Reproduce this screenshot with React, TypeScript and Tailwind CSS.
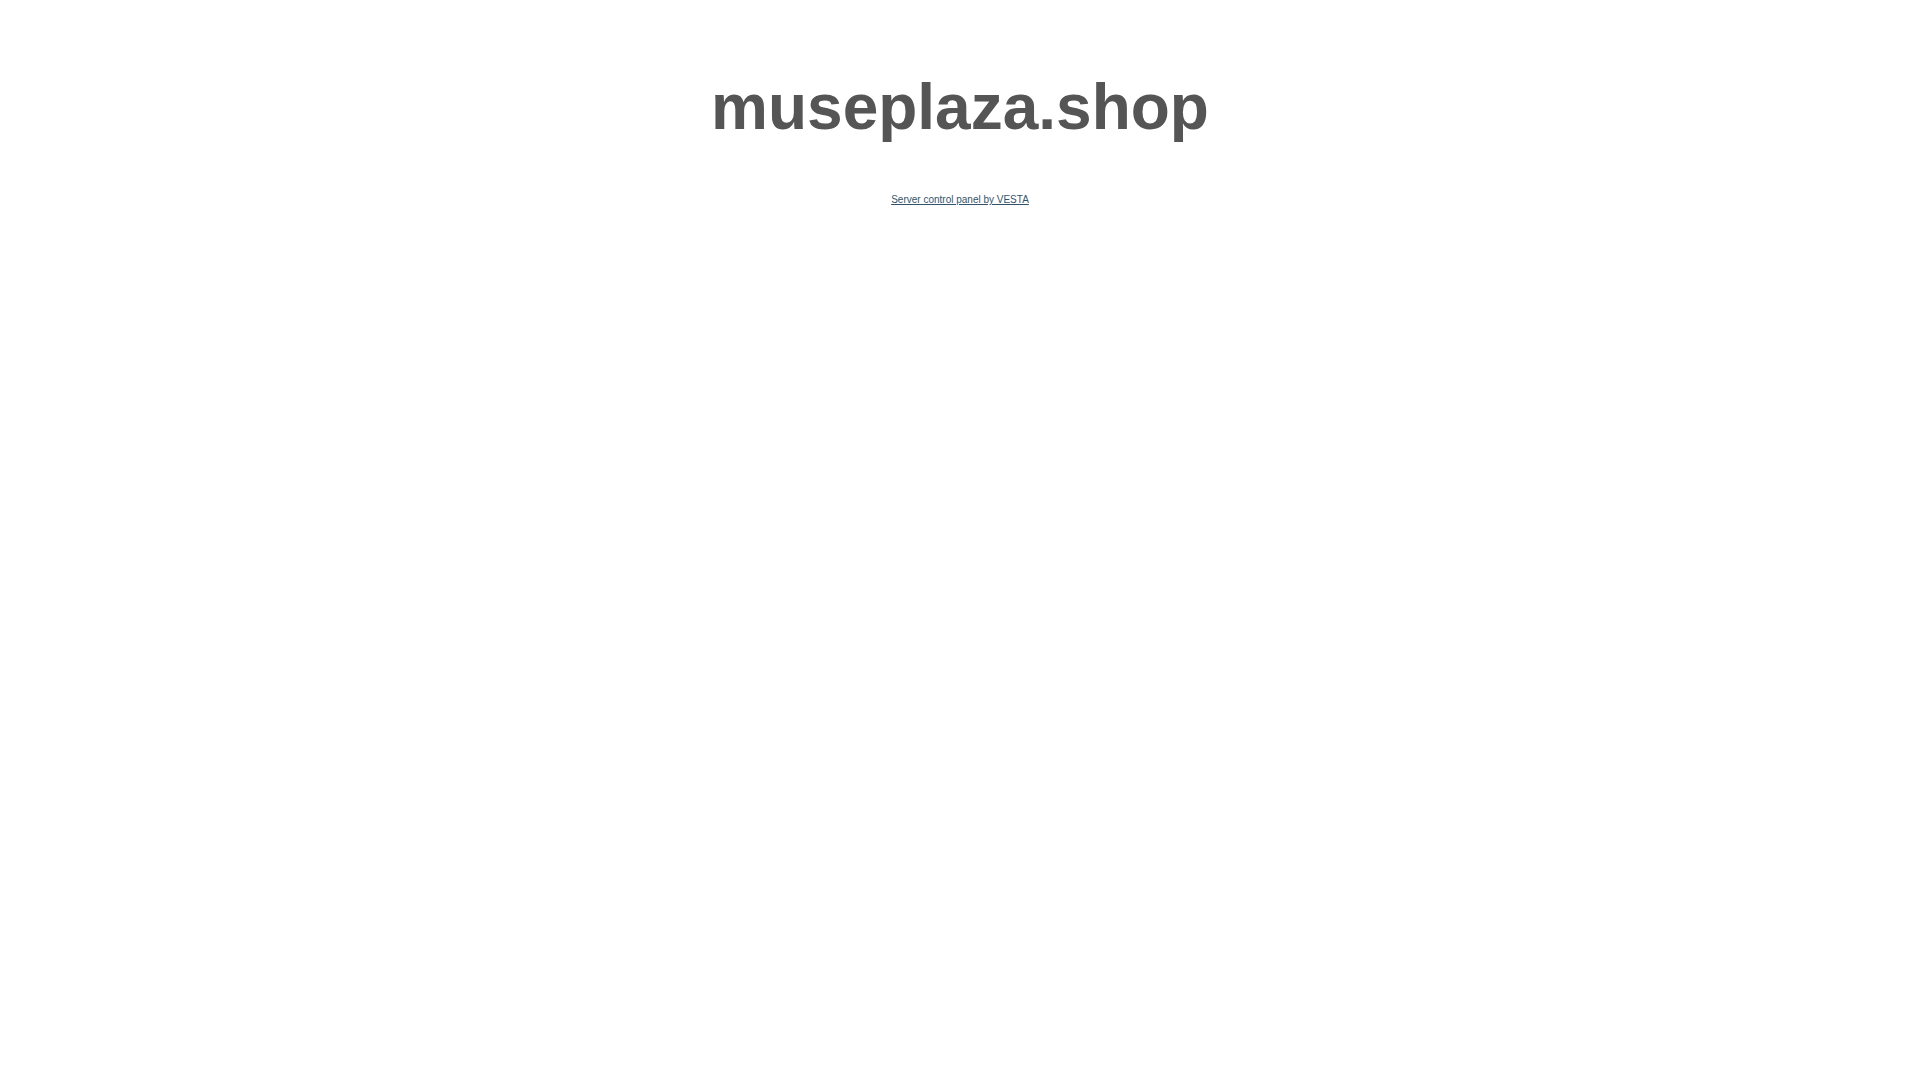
export default function App() {
  return (
    <main className="flex min-h-screen flex-col items-center bg-white px-4 pt-[70px] font-['Liberation_Sans',Arial,sans-serif]">
      <h1 className="text-center text-[64px] leading-[74px] font-bold text-[#555555]">museplaza.shop</h1>
      <a href="#" className="mt-[50px] text-[10px] leading-[12px] text-[#34536a] underline">
        Server control panel by VESTA
      </a>
    </main>
  )
}
